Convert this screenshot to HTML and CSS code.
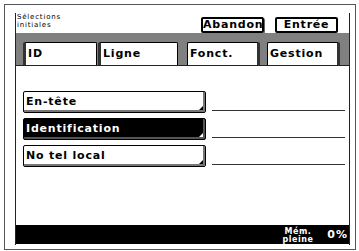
FILE: index.html
```html
<!DOCTYPE html>
<html lang="fr">
<head>
<meta charset="utf-8">
<link rel="stylesheet" href="styles.css">
</head>
<body>
<div class="frame">
  <div class="panel">
    <div class="header">
      <div class="title">Sélections<br>initiales</div>
      <div class="actions">
        <div class="cmd cmd-shadow">Abandon</div>
        <div class="cmd">Entrée</div>
      </div>
    </div>
    <div class="tabs">
      <div class="tab tab-left tab-id">ID</div>
      <div class="tab tab-left tab-ligne">Ligne</div>
      <div class="tab tab-right tab-fonct">Fonct.</div>
      <div class="tab tab-right tab-gestion">Gestion</div>
    </div>
    <div class="content">
      <div class="row"><div class="btn">En-tête</div><div class="rule"></div></div>
      <div class="row"><div class="btn btn-sel">Identification</div><div class="rule"></div></div>
      <div class="row"><div class="btn">No tel local</div><div class="rule"></div></div>
    </div>
    <div class="status">
      <div class="mem">Mém.<br>pleine</div>
      <div class="pct">0%</div>
    </div>
  </div>
</div>
</body>
</html>
```
FILE: styles.css
```css
* { box-sizing: border-box; }
html, body { margin: 0; padding: 0; background: #fff; }
body { width: 359px; height: 251px; overflow: hidden; font-family: "DejaVu Sans", sans-serif; color: #000; }

.frame {
  margin: 4px 0 0 4px;
  width: 352px;
  height: 246px;
  border: 1px solid #555;
}
.panel {
  margin: 8px 0 0 10px;
  width: 335px;
  height: 232px;
  border-left: 1px solid #222;
  border-right: 1px solid #222;
  display: flex;
  flex-direction: column;
}
.header {
  height: 20px;
  display: flex;
  justify-content: space-between;
  align-items: flex-start;
}
.title {
  font-size: 7px;
  line-height: 8px;
  letter-spacing: 0.8px;
  padding: 0 0 0 1px;
}
.actions {
  display: flex;
  gap: 11px;
  margin: 4px 11px 0 0;
}
.cmd {
  width: 63px;
  height: 16px;
  border: 2px solid #000;
  border-radius: 2px;
  font-weight: bold;
  font-size: 11px;
  line-height: 12px;
  letter-spacing: 0.8px;
  text-align: center;
}
.cmd-shadow { box-shadow: 1px 1px 0 #666; }

.tabs {
  height: 33px;
  background: #808080;
  display: flex;
  align-items: flex-end;
  padding-left: 7px;
  border-bottom: 1px solid #222;
}
.tab {
  height: 23px;
  background: #fff;
  border: 1px solid #000;
  border-bottom: none;
  border-radius: 2px 2px 0 0;
  font-weight: bold;
  font-size: 11px;
  line-height: 18px;
  padding-top: 2px;
  letter-spacing: 0.8px;
}
.tab-left { border-left: 3px solid #333; padding-left: 2px; }
.tab-right { border-right: 3px solid #333; padding-left: 2px; }
.tab-id { width: 74px; }
.tab-ligne { width: 80px; margin-left: 1px; }
.tab-fonct { width: 73px; margin-left: 9px; }
.tab-gestion { width: 73px; margin-left: 7px; }

.content {
  flex: 1;
  display: flex;
  flex-direction: column;
  gap: 5px;
  padding: 25px 0 0 7px;
}
.row {
  display: flex;
  align-items: flex-end;
}
.btn {
  position: relative;
  width: 183px;
  height: 22px;
  border: 1px solid #000;
  border-radius: 2px;
  box-shadow: inset -2px -2px 0 #777;
  font-weight: bold;
  font-size: 11px;
  line-height: 19px;
  padding-left: 2px;
  letter-spacing: 0.8px;
}
.btn::after {
  content: "";
  position: absolute;
  right: 2px;
  bottom: 2px;
  border-style: solid;
  border-width: 0 0 4px 4px;
  border-color: transparent transparent #000 transparent;
}
.btn-sel {
  background: #000;
  color: #fff;
  box-shadow: inset -2px -2px 0 #555;
}
.btn-sel::after { border-color: transparent transparent #fff transparent; }
.rule {
  width: 133px;
  height: 1px;
  background: #333;
  margin: 0 0 2px 6px;
}

.status {
  height: 19px;
  background: #000;
  color: #fff;
  display: flex;
  justify-content: flex-end;
  align-items: center;
  font-weight: bold;
  padding-right: 1px;
  margin-bottom: 1px;
}
.mem {
  font-size: 8px;
  line-height: 8px;
  letter-spacing: 0.5px;
  text-align: center;
  margin-right: 14px;
  padding-top: 2px;
}
.pct {
  font-size: 11px;
  letter-spacing: 1px;
}
```
